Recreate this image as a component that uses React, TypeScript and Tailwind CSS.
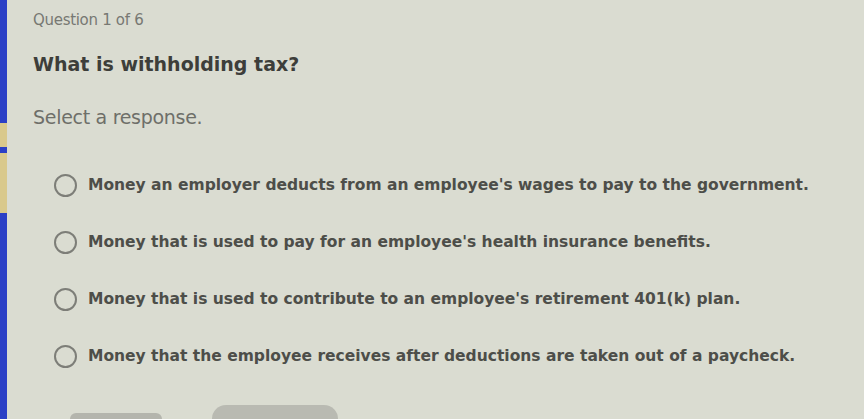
import { useState } from "react"

const choices = [
    "Money an employer deducts from an employee's wages to pay to the government.",
    "Money that is used to pay for an employee's health insurance benefits.",
    "Money that is used to contribute to an employee's retirement 401(k) plan.",
    "Money that the employee receives after deductions are taken out of a paycheck.",
]

function Radio({ checked }: { checked: boolean }) {
    return (
        <span className="flex h-[23px] w-[23px] shrink-0 items-center justify-center rounded-full border-2 border-[#7d7e78]">
            {checked && <span className="h-[11px] w-[11px] rounded-full bg-[#5a5b56]" />}
        </span>
    )
}

export default function App() {
    const [selected, setSelected] = useState<number | null>(null)

    return (
        <div className="flex h-[419px] w-[864px] overflow-hidden bg-[#dadcd1] font-['DejaVu_Sans',sans-serif]">
            {/* progress rail on the left edge */}
            <div className="flex w-[7px] shrink-0 flex-col">
                <div className="h-[123px] bg-[#2b40c6]" />
                <div className="h-[24px] bg-[#d9c98c]" />
                <div className="h-[6px] bg-[#2b40c6]" />
                <div className="h-[60px] bg-[#d9c98c]" />
                <div className="flex-1 bg-[#2b40c6]" />
            </div>

            <div className="flex flex-1 flex-col pl-[26px]">
                <p className="mt-[11px] text-[15px] leading-[18px] tracking-[-0.3px] text-[#777873]">Question 1 of 6</p>
                <h1 className="mt-[23px] text-[19px] font-bold leading-[24px] text-[#3d3e3a]">What is withholding tax?</h1>
                <p className="mt-[29px] text-[19px] leading-[24px] tracking-[-0.3px] text-[#6e6f69]">Select a response.</p>

                <div className="mt-[45px] flex flex-col gap-[34px] pl-[21px]">
                    {choices.map((text, i) => (
                        <label
                            key={i}
                            onClick={() => setSelected(i)}
                            className="flex h-[23px] cursor-pointer items-center gap-[11px]"
                        >
                            <Radio checked={selected === i} />
                            <span className="text-[15.5px] font-bold text-[#4d4e49]">{text}</span>
                        </label>
                    ))}
                </div>

                {/* nav buttons, cut off at the bottom */}
                <div className="mt-auto flex items-end gap-[50px] pl-[37px]">
                    <div className="h-[6px] w-[92px] rounded-t-[14px] bg-[#b4b5ad]" />
                    <div className="h-[14px] w-[126px] rounded-t-[16px] bg-[#b9bab2]" />
                </div>
            </div>
        </div>
    )
}
